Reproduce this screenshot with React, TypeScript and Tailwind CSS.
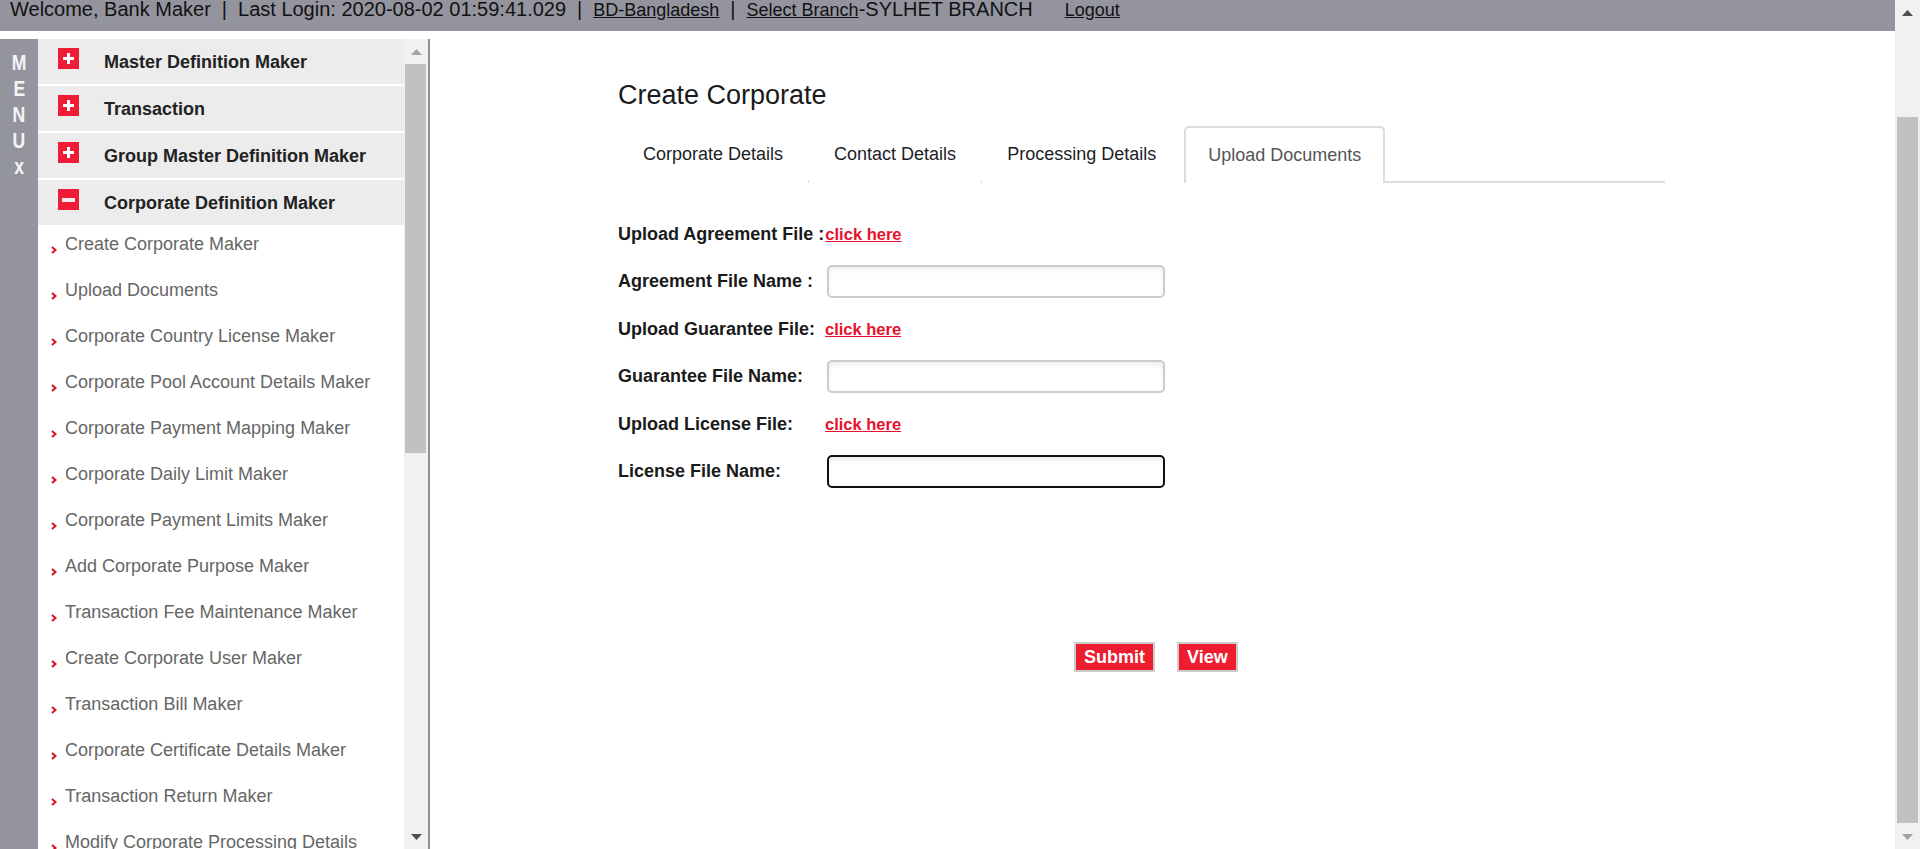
import React from 'react'

const closedSections = ['Master Definition Maker', 'Transaction', 'Group Master Definition Maker']

const subItems = [
  'Create Corporate Maker',
  'Upload Documents',
  'Corporate Country License Maker',
  'Corporate Pool Account Details Maker',
  'Corporate Payment Mapping Maker',
  'Corporate Daily Limit Maker',
  'Corporate Payment Limits Maker',
  'Add Corporate Purpose Maker',
  'Transaction Fee Maintenance Maker',
  'Create Corporate User Maker',
  'Transaction Bill Maker',
  'Corporate Certificate Details Maker',
  'Transaction Return Maker',
  'Modify Corporate Processing Details',
]

const tabs = ['Corporate Details', 'Contact Details', 'Processing Details']

const PlusBox = () => (
  <svg width="21" height="21" viewBox="0 0 21 21" className="shrink-0">
    <rect width="21" height="21" fill="#ee1c34" />
    <rect x="5" y="9" width="11" height="3" fill="#fff" />
    <rect x="9" y="5" width="3" height="11" fill="#fff" />
  </svg>
)

const MinusBox = () => (
  <svg width="21" height="21" viewBox="0 0 21 21" className="shrink-0">
    <rect width="21" height="21" fill="#ee1c34" />
    <rect x="4" y="9" width="13" height="4" fill="#f6f0f0" />
  </svg>
)

const Bullet = () => (
  <svg width="6" height="8" viewBox="0 0 6 8" className="shrink-0 mt-[21px]">
    <path d="M1 1 L4.5 4 L1 7" stroke="#d0101e" strokeWidth="2" fill="none" />
  </svg>
)

const Arrow = ({ up, color }: { up?: boolean; color: string }) => (
  <svg width="11" height="6" viewBox="0 0 11 6">
    <polygon points={up ? '0,6 5.5,0 11,6' : '0,0 5.5,6 11,0'} fill={color} />
  </svg>
)

function Sep() {
  return <span className="mx-[11px]">|</span>
}

function Header() {
  return (
    <div className="h-[31px] bg-[#94949f] overflow-hidden">
      <div className="-mt-[2px] pl-[10px] flex items-baseline text-[20px] leading-[23px] text-[#111] whitespace-nowrap">
        <span>Welcome, Bank Maker</span>
        <Sep />
        <span>Last Login: 2020-08-02 01:59:41.029</span>
        <Sep />
        <span className="text-[18px] underline">BD-Bangladesh</span>
        <Sep />
        <span>
          <span className="text-[18px] underline">Select Branch</span>-SYLHET BRANCH
        </span>
        <span className="ml-[32px] text-[18px] underline">Logout</span>
      </div>
    </div>
  )
}

function Sidebar() {
  return (
    <div className="flex h-full">
      <div className="w-[38px] bg-[#94949f] flex flex-col items-center pt-[11px] font-bold text-[#f4f4f6]">
        {['M', 'E', 'N', 'U', 'x'].map((l) => (
          <div key={l} className="h-[26px] text-[22px] leading-[26px] scale-x-80">
            {l}
          </div>
        ))}
      </div>
      <div className="w-[366px] overflow-hidden bg-white">
        {closedSections.map((s) => (
          <div key={s} className="h-[47px] border-b-2 border-white bg-[#ececec] flex items-start pl-[20px]">
            <span className="mt-[9px]">
              <PlusBox />
            </span>
            <span className="ml-[25px] pt-[1px] text-[18px] leading-[45px] font-bold text-[#222]">{s}</span>
          </div>
        ))}
        <div className="h-[45px] bg-[#ececec] flex items-start pl-[20px]">
          <span className="mt-[9px]">
            <MinusBox />
          </span>
          <span className="ml-[25px] pt-[1px] text-[18px] leading-[45px] font-bold text-[#222]">
            Corporate Definition Maker
          </span>
        </div>
        {subItems.map((s) => (
          <div key={s} className="h-[46px] flex items-start pl-[13px]">
            <Bullet />
            <span className="ml-[8px] pt-[8px] text-[18px] leading-[22px] text-[#666] whitespace-nowrap">{s}</span>
          </div>
        ))}
      </div>
      <div className="w-[24px] bg-[#f1f1f1] flex flex-col">
        <div className="h-[25px] flex items-center justify-center">
          <Arrow up color="#a3a3a3" />
        </div>
        <div className="h-[389px] ml-[1px] mr-[2px] bg-[#c1c1c1]" />
        <div className="flex-1" />
        <div className="h-[24px] flex items-center justify-center">
          <Arrow color="#505050" />
        </div>
      </div>
      <div className="w-[2px] bg-[#8e8e9a]" />
    </div>
  )
}

function Field({ focused }: { focused?: boolean }) {
  return (
    <input
      type="text"
      className={`w-[338px] h-[33px] rounded-[5px] border-2 bg-white shadow-[inset_0_3px_4px_rgba(0,0,0,0.07)] outline-none ${
        focused ? 'border-[#111]' : 'border-[#cccccc]'
      }`}
    />
  )
}

function LinkRow({ label }: { label: string }) {
  return (
    <div className="h-[46px] flex items-center">
      <span className="w-[207px] text-[18px] font-bold text-[#1a1a1a] whitespace-nowrap">{label}</span>
      <span className="text-[16.5px] font-bold text-[#e8112d] underline">click here</span>
    </div>
  )
}

function InputRow({ label, focused }: { label: string; focused?: boolean }) {
  return (
    <div className="h-[49px] flex items-center">
      <span className="w-[209px] text-[18px] font-bold text-[#1a1a1a] whitespace-nowrap">{label}</span>
      <Field focused={focused} />
    </div>
  )
}

function Main() {
  return (
    <div className="flex-1 pl-[188px] pt-[41px]">
      <div className="w-[1047px]">
        <h1 className="text-[27px] leading-[31px] text-[#1a1a1a]">Create Corporate</h1>
        <div className="mt-[15px] flex h-[57px]">
          {tabs.map((t, i) => (
            <div key={t} className="flex">
              <div className="px-[25px] flex items-center text-[18px] text-[#1d1d26]">{t}</div>
              {i < 2 ? <div className="w-px h-[3px] self-end bg-[#dddddd]" /> : <div className="w-[3px]" />}
            </div>
          ))}
          <div className="border-2 border-b-0 border-[#dddddd] rounded-t-[5px] bg-white px-[22px] flex items-center text-[18px] text-[#555]">
            Upload Documents
          </div>
          <div className="flex-1 h-[2px] self-end bg-[#dddddd]" />
        </div>

        <div className="mt-[28px]">
          <div className="h-[46px] flex items-center">
            <span className="text-[18px] font-bold text-[#1a1a1a]">Upload Agreement File :</span>
            <span className="ml-[1px] text-[16.5px] font-bold text-[#e8112d] underline">click here</span>
          </div>
          <InputRow label="Agreement File Name :" />
          <LinkRow label="Upload Guarantee File:" />
          <InputRow label="Guarantee File Name:" />
          <LinkRow label="Upload License File:" />
          <InputRow label="License File Name:" focused />
        </div>

        <div className="mt-[146px] pl-[456px] flex gap-[22px]">
          <button className="h-[30px] px-2 border-2 border-[#cccccc] bg-[#ed1c2e] text-white font-bold text-[18px] leading-[26px]">
            Submit
          </button>
          <button className="h-[30px] px-2 border-2 border-[#cccccc] bg-[#ed1c2e] text-white font-bold text-[18px] leading-[26px]">
            View
          </button>
        </div>
      </div>
    </div>
  )
}

export default function App() {
  return (
    <div className="w-[1920px] h-[849px] flex overflow-hidden bg-white font-['Liberation_Sans',Arial,sans-serif]">
      <div className="w-[1895px] flex flex-col">
        <Header />
        <div className="h-[8px]" />
        <div className="flex flex-1 min-h-0">
          <Sidebar />
          <Main />
        </div>
      </div>
      <div className="w-[25px] bg-[#f1f1f1] flex flex-col">
        <div className="h-[25px] flex items-center justify-center">
          <Arrow up color="#505050" />
        </div>
        <div className="mt-[92px] h-[706px] mx-[2px] bg-[#c1c1c1]" />
        <div className="flex-1" />
        <div className="h-[25px] flex items-center justify-center">
          <Arrow color="#a3a3a3" />
        </div>
      </div>
    </div>
  )
}
